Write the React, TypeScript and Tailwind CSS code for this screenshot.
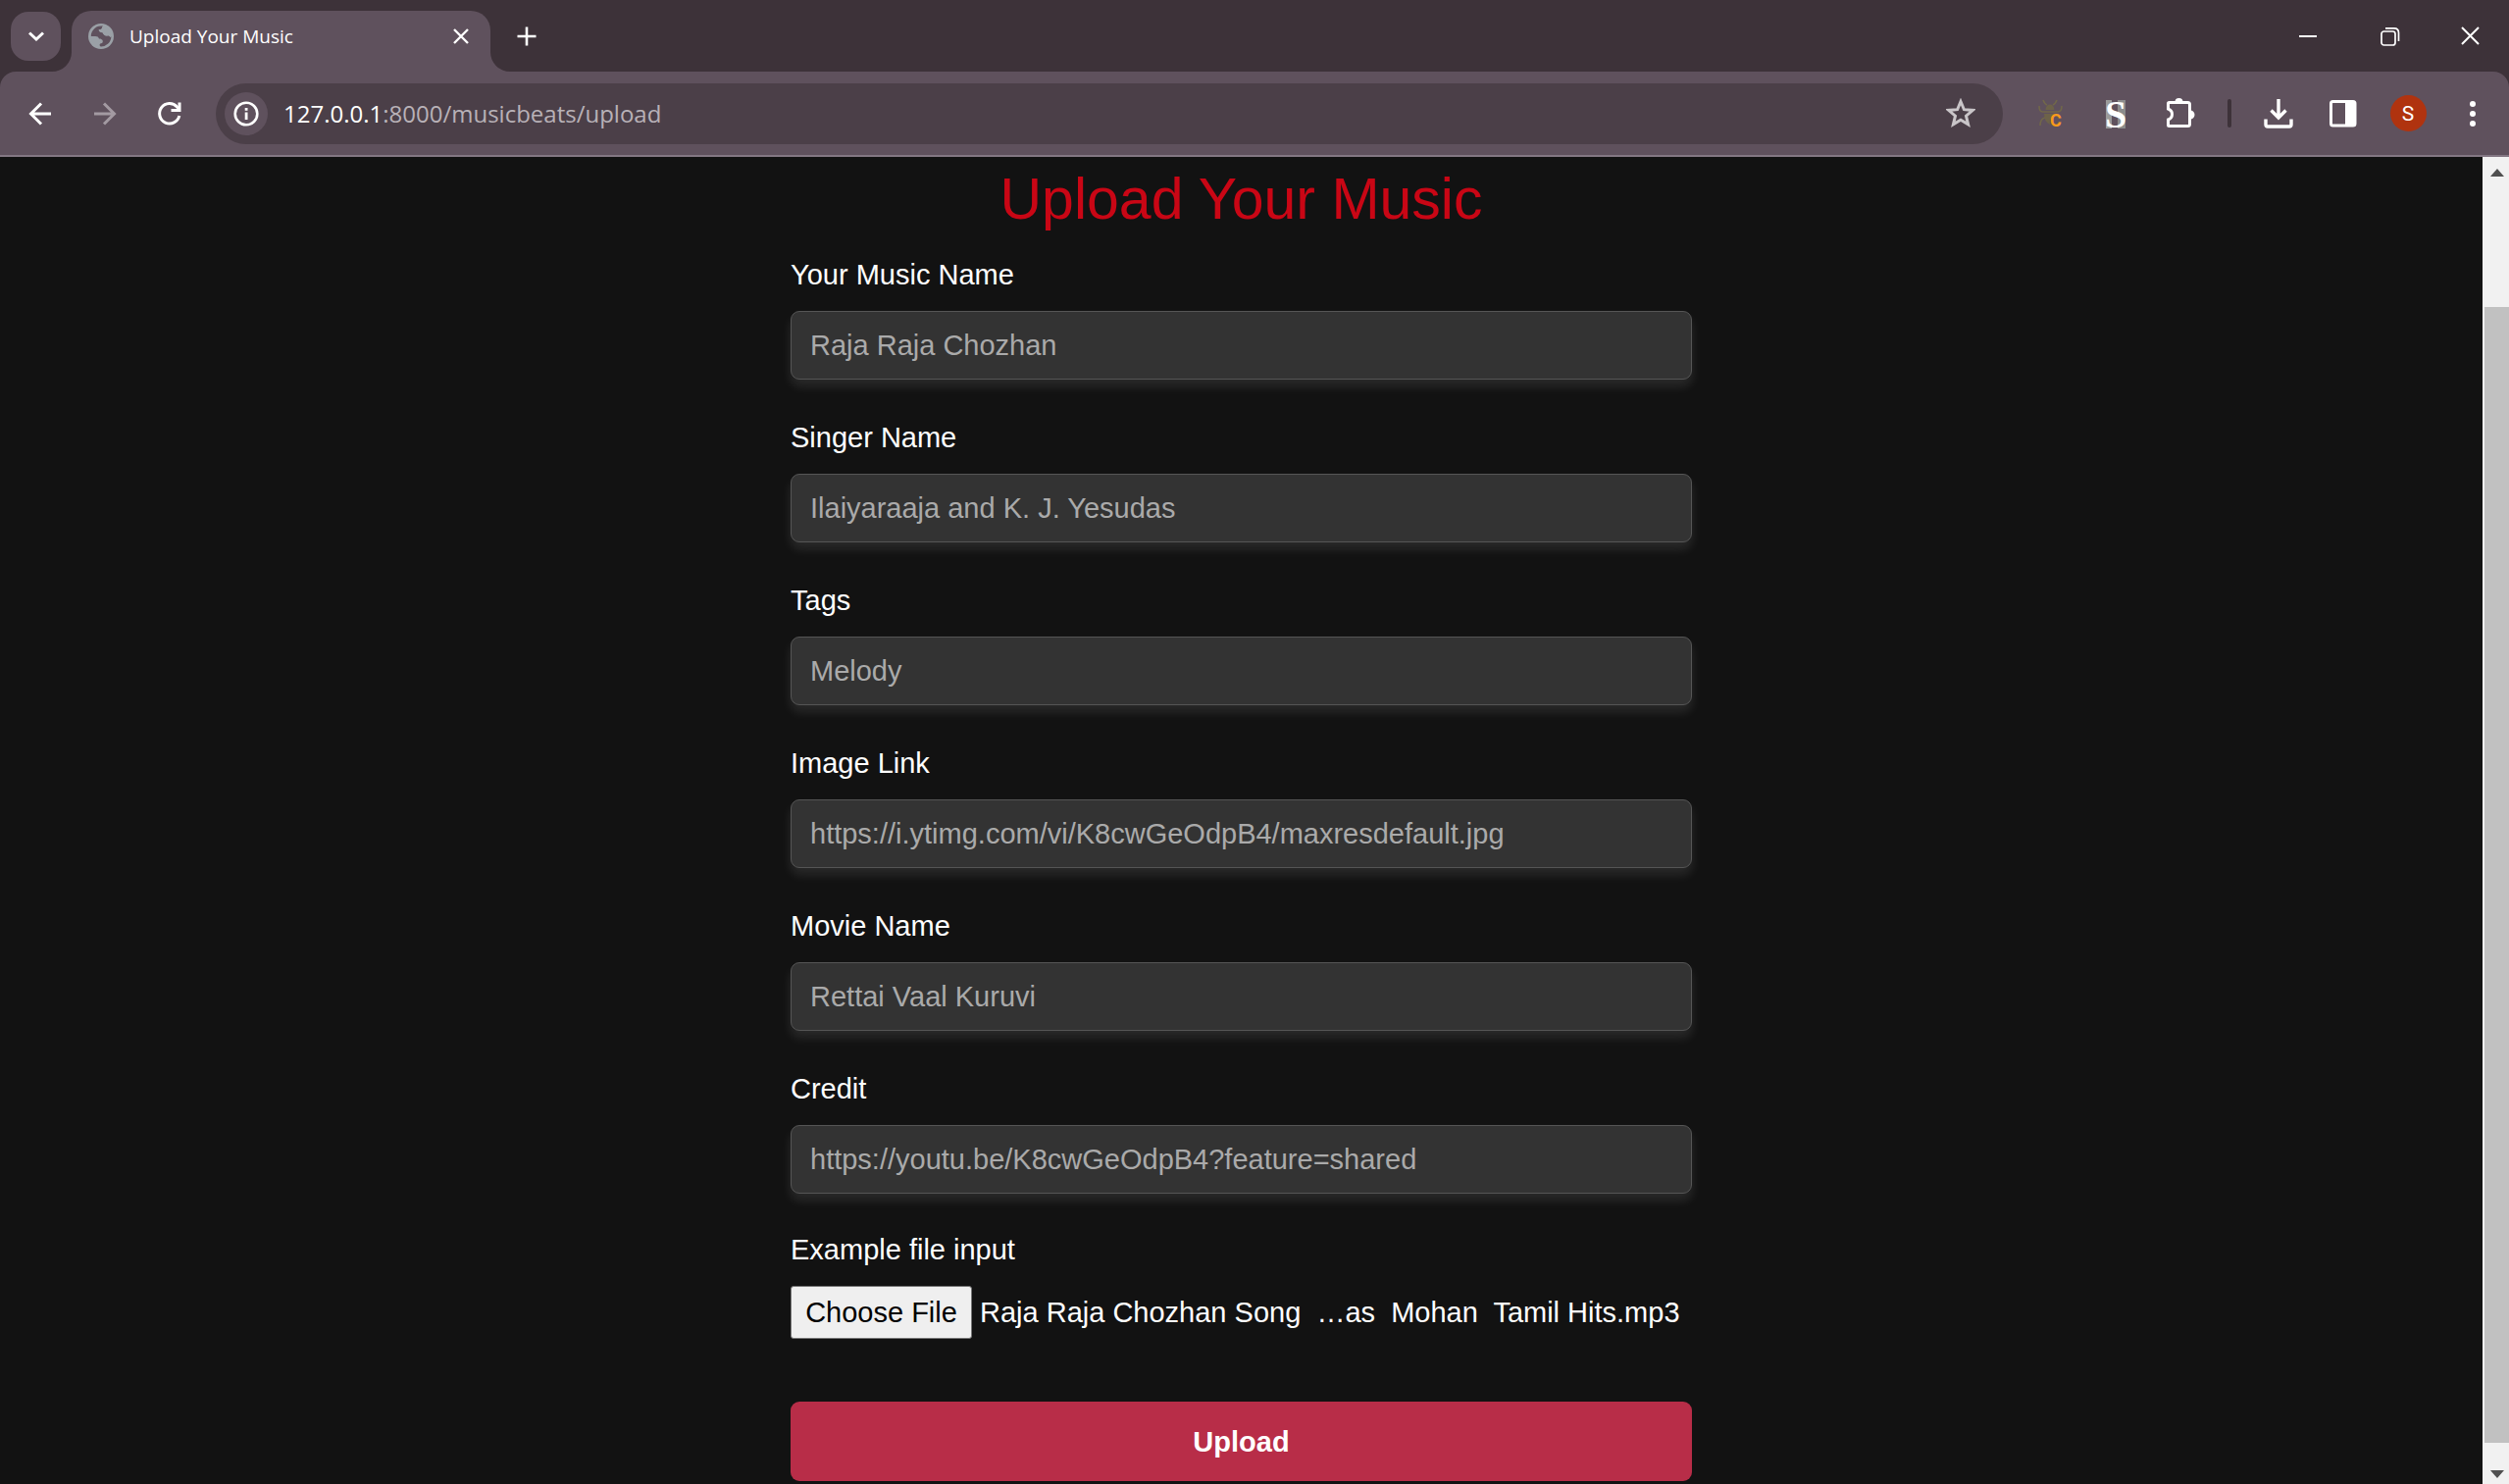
import React, { useRef } from "react";

type IconButtonProps = { label: string; className: string; children: React.ReactNode };

function IconButton({ label, className, children }: IconButtonProps) {
  return (
    <button type="button" aria-label={label} className={`flex shrink-0 items-center justify-center ${className}`}>
      {children}
    </button>
  );
}

function GlobeIcon() {
  return (
    <svg width="26" height="26" viewBox="0 0 26 26" className="shrink-0">
      <circle cx="13" cy="13" r="13" fill="#9aa0a6" />
      <path
        d="M15 2.6 C13.6 4 14 5.4 13.4 6.4 C12.6 6.2 11.6 6 10.8 6.6 C11.4 8.4 12.6 9 14.6 9.2 C15.4 11.4 17 12.6 19 12.4 C20.4 12.2 21.6 12.6 22.4 14 C22.8 14 23.2 13.6 23.4 13 A10.4 10.4 0 0 1 12.6 23.4 C11.4 22.6 11.2 21.4 12.2 20.6 C13.4 20.2 14.6 20.2 14.8 18.6 C15 16.4 12.6 15.6 11 15.6 C10.6 13.8 9.2 13 7.2 13 L2.8 13 A10.4 10.4 0 0 1 15 2.6Z"
        fill="#5f515d"
      />
      <path d="M10.5 6.2 C13 6.4 14 5.4 14.6 3 C20 3.6 23.4 8 23.4 13 C22 11.8 21 12.6 19 12.4 C16.4 12.4 15.4 11 14.8 9.2 C12.6 9.4 11 8.4 10.5 6.2Z" fill="#9aa0a6" />
    </svg>
  );
}

function BugIcon() {
  return (
    <svg width="40" height="44" viewBox="-6 -7 40 44">
      <g fill="none" stroke="#71674a" strokeWidth="1.6">
        <path d="M6 1 Q7.500 5 10 6 M20 1 Q18.500 5 16 6" />
        <path d="M2 7 Q2 13 5.500 13 L21 13 Q25 13 25 7" />
        <path d="M3 27 Q3 20 8 19" />
      </g>
      <path d="M8.500 11 Q9 5.500 13 5.500 Q17 5.500 17.500 11Z M7 15 H19 Q19 17 15 18 Q12 21 13 26 Q7 23 7 15Z" fill="#6d6249" />
      <text x="13" y="28" fontFamily="Roboto" fontWeight="700" fontSize="18" fill="#f79a1b">
        C
      </text>
    </svg>
  );
}

function TabStrip() {
  return (
    <div className="flex h-[73px] shrink-0 bg-[#3d3239]">
      <IconButton label="Search tabs" className="mt-3 ml-[11px] h-[50px] w-[51px] rounded-[18px] bg-[#5f515d]">
        <svg width="16" height="10" viewBox="0 0 16 10" fill="none" stroke="#fff" strokeWidth="3">
          <path d="M1 1.500 L8 8 L15 1.500" />
        </svg>
      </IconButton>
      <div className="relative mt-[11px] ml-[11px] flex w-[427px] items-center rounded-t-[20px] bg-[#5f515d] pb-[10px] pl-[17px]">
        <svg width="20" height="20" viewBox="0 0 20 20" className="absolute bottom-0 -left-5" fill="#5f515d">
          <path d="M20 0 V20 H0 A20 20 0 0 0 20 0Z" />
        </svg>
        <svg width="20" height="20" viewBox="0 0 20 20" className="absolute -right-5 bottom-0" fill="#5f515d">
          <path d="M0 0 V20 H20 A20 20 0 0 1 0 0Z" />
        </svg>
        <GlobeIcon />
        <span className="ml-4 grow text-[19px] leading-7 text-white">Upload Your Music</span>
        <IconButton label="Close tab" className="mr-[15px] size-[30px]">
          <svg width="16" height="16" viewBox="0 0 16 16" stroke="#fff" strokeWidth="2.4">
            <path d="M1 1 L15 15 M15 1 L1 15" />
          </svg>
        </IconButton>
      </div>
      <IconButton label="New tab" className="ml-3 w-[50px]">
        <svg width="20" height="20" viewBox="0 0 20 20" stroke="#fff" strokeWidth="2.6">
          <path d="M10 0.500 V19.500 M0.500 10 H19.500" />
        </svg>
      </IconButton>
      <div className="ml-auto flex">
        <IconButton label="Minimize" className="w-[84px]">
          <svg width="18" height="2" viewBox="0 0 18 2">
            <rect width="18" height="2" fill="#fff" />
          </svg>
        </IconButton>
        <IconButton label="Restore" className="w-[84px]">
          <svg width="20" height="20" viewBox="0 0 20 20" fill="none" stroke="#fff" strokeWidth="1.7">
            <rect x="1" y="5" width="14" height="14" rx="2.500" />
            <path d="M5 1.800 H14 Q18.500 1.800 18.500 6.500 V15" />
          </svg>
        </IconButton>
        <IconButton label="Close" className="w-[79px]">
          <svg width="19" height="19" viewBox="0 0 19 19" stroke="#fff" strokeWidth="2">
            <path d="M1 1 L18 18 M18 1 L1 18" />
          </svg>
        </IconButton>
      </div>
    </div>
  );
}

function Toolbar() {
  return (
    <div className="shrink-0 bg-[#3d3239]">
      <div className="flex h-[87px] items-center rounded-t-[16px] border-b-2 border-[#837783] bg-[#5f515d] pr-1 pl-2">
        <IconButton label="Back" className="h-[60px] w-[66px]">
          <svg width="24" height="24" viewBox="0 0 24 24" fill="none" stroke="#fff" strokeWidth="3">
            <path d="M23 12 H2.500 M13 1.500 L2.500 12 L13 22.500" />
          </svg>
        </IconButton>
        <IconButton label="Forward" className="h-[60px] w-[66px]">
          <svg width="24" height="24" viewBox="0 0 24 24" fill="none" stroke="#a39aa2" strokeWidth="3">
            <path d="M1 12 H21.500 M11 1.500 L21.500 12 L11 22.500" />
          </svg>
        </IconButton>
        <IconButton label="Reload" className="h-[60px] w-[66px]">
          <svg width="26" height="26" viewBox="0 0 26 26" fill="none" stroke="#fff" strokeWidth="3">
            <path d="M22.800 15 A10.200 10.200 0 1 1 20.500 6 L23 8.600" />
            <path d="M23 1.500 V9.500 H14.500" />
          </svg>
        </IconButton>
        <div className="ml-[14px] flex h-[62px] grow items-center rounded-full bg-[#4b3f48] pl-[9px]">
          <IconButton label="View site information" className="size-11 rounded-full bg-[#5f515d]">
            <svg width="26" height="26" viewBox="0 0 26 26">
              <circle cx="13" cy="13" r="11.300" fill="none" stroke="#fff" strokeWidth="2.600" />
              <rect x="11.700" y="11.500" width="2.800" height="7.500" fill="#fff" />
              <rect x="11.700" y="7" width="2.800" height="2.800" fill="#fff" />
            </svg>
          </IconButton>
          <div className="ml-4 grow text-[24px] leading-8 text-[#b8b1b7]">
            <span className="text-white">127.0.0.1</span>:8000/musicbeats/upload
          </div>
          <IconButton label="Bookmark this tab" className="mr-[13px] size-[60px]">
            <svg width="30" height="32" viewBox="0 0 30 32" fill="none" stroke="#c9c5c8" strokeWidth="3">
              <path d="M15 3.500 L18.400 11.700 L27.300 12.400 L20.500 18.200 L22.600 26.900 L15 22.200 L7.400 26.900 L9.500 18.200 L2.700 12.400 L11.600 11.700Z" />
            </svg>
          </IconButton>
        </div>
        <IconButton label="Bug extension" className="ml-4 h-[60px] w-[66px]">
          <BugIcon />
        </IconButton>
        <IconButton label="S extension" className="h-[60px] w-[66px]">
          <svg width="40" height="50" viewBox="-8 -10 40 50">
            <rect x="2" y="1" width="6" height="29" fill="#9b9b9b" />
            <rect x="14" y="1" width="8" height="29" fill="#8c8c8c" />
            <text x="12" y="29" textAnchor="middle" fontFamily="Liberation Serif" fontWeight="700" fontSize="40" fill="#fff">
              S
            </text>
          </svg>
        </IconButton>
        <IconButton label="Extensions" className="h-[60px] w-[66px]">
          <svg width="30" height="34" viewBox="1 1 30 34" className="overflow-visible">
            <path
              d="M4.500 6.500 H23.500 Q25.500 6.500 25.500 8.500 V28.500 Q25.500 30.500 23.500 30.500 H4.500 Q3.500 30.500 3.500 29.500 V24 Q7.500 22.500 7.500 18.500 Q7.500 14.500 3.500 13 V7.500 Q3.500 6.500 4.500 6.500Z"
              fill="none"
              stroke="#fff"
              strokeWidth="3"
            />
            <path d="M10.500 6 A4 4 0 0 1 18.500 6Z M26 14.500 A4.500 4.500 0 0 1 26 23.500Z" fill="#fff" />
          </svg>
        </IconButton>
        <div className="mx-[15px] h-[29px] w-1 rounded-full bg-[#3d3239]" />
        <IconButton label="Downloads" className="h-[60px] w-[66px]">
          <svg width="30" height="30" viewBox="0 0 30 30" fill="none" stroke="#fff" strokeWidth="3.400">
            <path d="M15 0 V19 M7.500 11.500 L15 19 L22.500 11.500" />
            <path d="M2 20.500 V26 Q2 28 4 28 H26 Q28 28 28 26 V20.500" />
          </svg>
        </IconButton>
        <IconButton label="Side panel" className="h-[60px] w-[66px]">
          <svg width="28" height="28" viewBox="0 0 28 28">
            <rect x="1.500" y="1.500" width="24.500" height="24.500" rx="2" fill="none" stroke="#fff" strokeWidth="3" />
            <rect x="16" y="1" width="10" height="25" fill="#fff" />
          </svg>
        </IconButton>
        <IconButton label="Profile" className="h-[60px] w-[66px]">
          <span className="flex size-[37px] items-center justify-center rounded-full bg-[#b0330f] font-[Roboto] text-[21px] leading-6 text-white">
            S
          </span>
        </IconButton>
        <IconButton label="Menu" className="h-[60px] w-[66px]">
          <svg width="6" height="26" viewBox="0 0 6 26" fill="#fff">
            <circle cx="3" cy="3" r="3" />
            <circle cx="3" cy="13" r="3" />
            <circle cx="3" cy="23" r="3" />
          </svg>
        </IconButton>
      </div>
    </div>
  );
}

const fields = [
  { id: "music", label: "Your Music Name", hint: "Raja Raja Chozhan" },
  { id: "singer", label: "Singer Name", hint: "Ilaiyaraaja and K. J. Yesudas" },
  { id: "tags", label: "Tags", hint: "Melody" },
  { id: "image", label: "Image Link", hint: "https://i.ytimg.com/vi/K8cwGeOdpB4/maxresdefault.jpg" },
  { id: "movie", label: "Movie Name", hint: "Rettai Vaal Kuruvi" },
  { id: "credit", label: "Credit", hint: "https://youtu.be/K8cwGeOdpB4?feature=shared" },
];

function UploadForm() {
  const fileRef = useRef<HTMLInputElement>(null);
  return (
    <form
      onSubmit={(e) => e.preventDefault()}
      className="mx-auto w-full max-w-[919px] pt-2 font-['Liberation_Sans',Arial,sans-serif] text-[29px] leading-[44px] text-white"
    >
      <h1 className="mb-5 text-center text-[59px] leading-[70px] text-[#c90615]">Upload Your Music</h1>
      <div className="flex flex-col gap-[37px]">
        {fields.map((f) => (
          <div key={f.id} className="flex flex-col gap-[15px]">
            <label htmlFor={f.id}>{f.label}</label>
            <input
              id={f.id}
              type="text"
              placeholder={f.hint}
              className="h-[70px] w-full rounded-[9px] border border-[#555] bg-[#333] px-[19px] text-white shadow-[0_7px_11px_rgba(255,255,255,0.1)] placeholder:text-[#aaa]"
            />
          </div>
        ))}
      </div>
      <div className="mt-[35px] flex flex-col gap-[15px]">
        <label htmlFor="file">Example file input</label>
        <div className="relative flex items-center gap-2">
          <input id="file" ref={fileRef} type="file" tabIndex={-1} className="sr-only" />
          <button
            type="button"
            onClick={() => fileRef.current?.click()}
            className="h-[54px] w-[185px] shrink-0 rounded-[3px] border border-[#767676] bg-[#efefef] text-black"
          >
            Choose File
          </button>
          <span className="whitespace-pre">{"Raja Raja Chozhan Song  …as  Mohan  Tamil Hits.mp3"}</span>
        </div>
      </div>
      <button type="submit" className="mt-16 h-[81px] w-full rounded-[9px] bg-[#b82d48] font-bold">
        Upload
      </button>
    </form>
  );
}

function Scrollbar() {
  return (
    <div className="flex w-[27px] shrink-0 flex-col bg-[#f1f1f1]" aria-hidden="true">
      <div className="flex h-8 items-center justify-center pl-[3px]">
        <svg width="14" height="8" viewBox="0 0 14 8" fill="#505050">
          <path d="M7 0 L14 8 H0Z" />
        </svg>
      </div>
      <div className="grow-[121]" />
      <div className="ml-0.5 grow-[1158] bg-[#c1c1c1]" />
      <div className="grow-[10]" />
      <div className="flex h-8 items-end justify-center pb-[6px] pl-[3px]">
        <svg width="14" height="8" viewBox="0 0 14 8" fill="#505050">
          <path d="M7 8 L14 0 H0Z" />
        </svg>
      </div>
    </div>
  );
}

export default function App() {
  return (
    <div className="flex h-screen flex-col overflow-hidden bg-[#121212] font-['Open_Sans','Noto_Sans',sans-serif]">
      <TabStrip />
      <Toolbar />
      <div className="flex min-h-0 grow">
        <main className="min-w-0 grow overflow-hidden">
          <UploadForm />
        </main>
        <Scrollbar />
      </div>
    </div>
  );
}
